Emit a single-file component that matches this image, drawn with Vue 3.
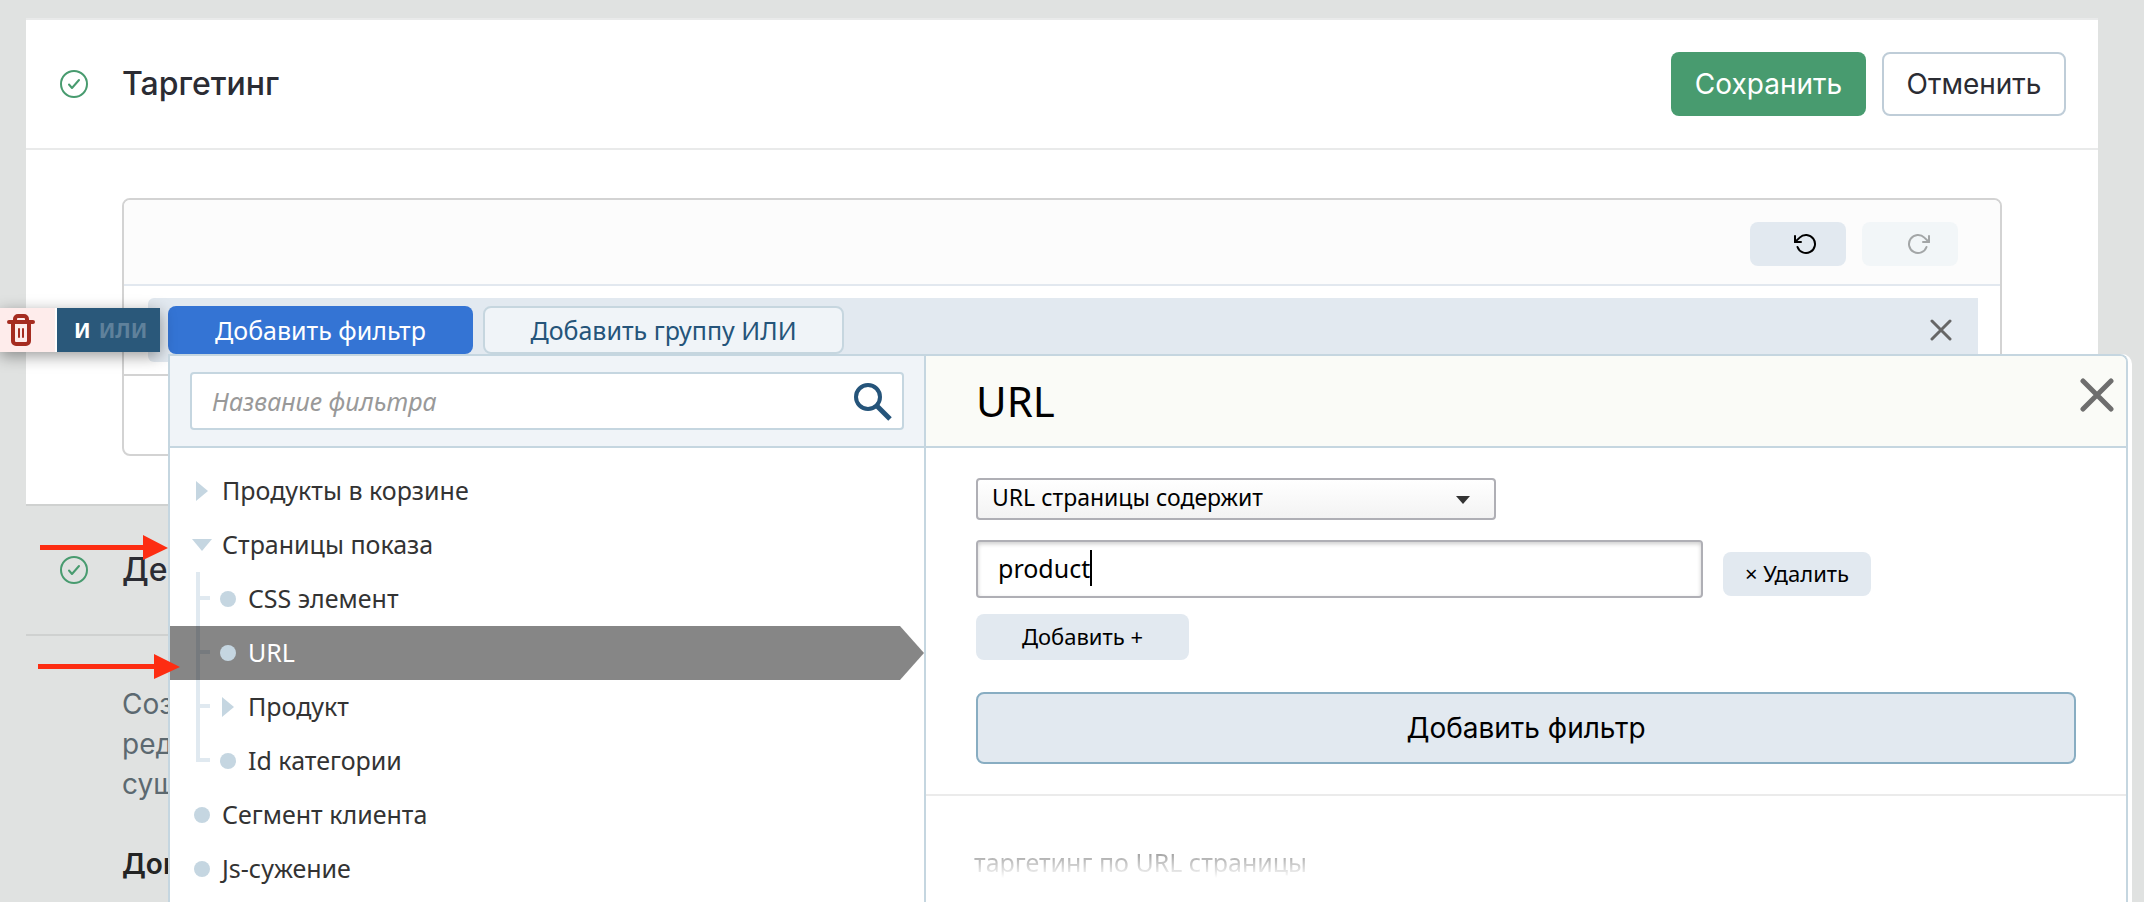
<script setup>
import { ref } from 'vue'

const search = ref('')
const condition = ref('contains')
const value = ref('product')

const filters = [
  { label: 'Продукты в корзине', marker: 'closed' },
  {
    label: 'Страницы показа',
    marker: 'open',
    children: [
      { label: 'CSS элемент', marker: 'dot' },
      { label: 'URL', marker: 'dot', selected: true },
      { label: 'Продукт', marker: 'closed' },
      { label: 'Id категории', marker: 'dot' },
    ],
  },
  { label: 'Сегмент клиента', marker: 'dot' },
  { label: 'Js-сужение', marker: 'dot' },
]
</script>

<template>
  <div class="page">
    <section class="card">
      <header class="card-head">
        <svg class="status" viewBox="0 0 28 28" aria-hidden="true">
          <circle cx="14" cy="14" r="13" />
          <path d="M9 14.5 12 18 19 10" />
        </svg>
        <h2>Таргетинг</h2>
        <div class="actions">
          <button type="button" class="btn save">Сохранить</button>
          <button type="button" class="btn cancel">Отменить</button>
        </div>
      </header>
      <div class="card-body">
        <div class="builder">
          <div class="tools">
            <button type="button" class="tool" aria-label="Назад">
              <svg viewBox="0 0 24 24">
                <polyline points="1 4 1 10 7 10" />
                <path d="M3.51 15a9 9 0 1 0 2.13-9.36L1 10" />
              </svg>
            </button>
            <button type="button" class="tool" disabled aria-label="Вперёд">
              <svg viewBox="0 0 24 24">
                <polyline points="23 4 23 10 17 10" />
                <path d="M20.49 15a9 9 0 1 1-2.12-9.36L23 10" />
              </svg>
            </button>
          </div>
          <div class="group-row">
            <div class="group">
              <button type="button" class="add add-filter">Добавить фильтр</button>
              <button type="button" class="add add-group">Добавить группу ИЛИ</button>
              <button type="button" class="group-close" aria-label="Закрыть">
                <svg viewBox="0 0 22 22"><path d="M2 2 20 20M20 2 2 20" /></svg>
              </button>
            </div>
          </div>
          <div class="builder-foot"></div>
        </div>
      </div>
    </section>

    <section class="next">
      <header class="card-head">
        <svg class="status" viewBox="0 0 28 28" aria-hidden="true">
          <circle cx="14" cy="14" r="13" />
          <path d="M9 14.5 12 18 19 10" />
        </svg>
        <h2>Ден</h2>
      </header>
      <div class="next-body">
        <p>Соз<br />ред<br />сущ</p>
        <h3>Доп</h3>
      </div>
    </section>

    <div class="chip">
      <button type="button" class="trash" aria-label="Удалить группу">
        <svg viewBox="0 0 28 32">
          <path class="line" d="M2 8H26M8 7V5a3 3 0 0 1 3-3h6a3 3 0 0 1 3 3V7M6 8V27a3 3 0 0 0 3 3h10a3 3 0 0 0 3-3V8" />
          <path class="thin" d="M12 15V23M16 15V23" />
        </svg>
      </button>
      <button type="button" class="logic"><b>И</b><b class="off">ИЛИ</b></button>
    </div>

    <div class="popup">
      <div class="popup-inner">
        <aside class="side">
          <div class="side-head">
            <label class="search">
              <input v-model="search" type="text" placeholder="Название фильтра" aria-label="Название фильтра" />
              <svg viewBox="0 0 38 38" aria-hidden="true">
                <circle cx="14" cy="14" r="12" />
                <path d="M23 23 36 36" />
              </svg>
            </label>
          </div>
          <ul class="tree">
            <li v-for="item in filters" :key="item.label">
              <button type="button" class="row">
                <span class="mark"><i :class="item.marker"></i></span>
                <span class="label">{{ item.label }}</span>
              </button>
              <ul v-if="item.children" class="branch">
                <li v-for="child in item.children" :key="child.label">
                  <button type="button" class="row" :class="{ selected: child.selected }">
                    <span class="mark"><i :class="child.marker"></i></span>
                    <span class="label">{{ child.label }}</span>
                  </button>
                </li>
              </ul>
            </li>
          </ul>
        </aside>

        <section class="detail">
          <header class="detail-head">
            <h1>URL</h1>
            <button type="button" class="detail-close" aria-label="Закрыть окно">
              <svg viewBox="0 0 34 34"><path d="M3 3 31 31M31 3 3 31" /></svg>
            </button>
          </header>
          <form class="form" @submit.prevent>
            <div class="select">
              <select v-model="condition" aria-label="Условие">
                <option value="contains">URL страницы содержит</option>
              </select>
              <svg viewBox="0 0 14 8" aria-hidden="true"><path d="M0 0H14L7 8Z" /></svg>
            </div>
            <div class="value-row">
              <div class="field">
                <input v-model="value" type="text" aria-label="Значение" />
                <span class="caret"></span>
              </div>
              <button type="button" class="small remove">× Удалить</button>
            </div>
            <button type="button" class="small more">Добавить +</button>
            <button type="submit" class="apply">Добавить фильтр</button>
          </form>
          <p class="about">таргетинг по URL страницы</p>
        </section>
      </div>
    </div>

    <svg class="pointer pointer-a" viewBox="0 0 128 26" aria-hidden="true">
      <path d="M0 10H103V0L128 13 103 25V15H0Z" />
    </svg>
    <svg class="pointer pointer-b" viewBox="0 0 142 26" aria-hidden="true">
      <path d="M0 10H116V0L142 13 116 25V15H0Z" />
    </svg>
  </div>
</template>

<style>
body {
  margin: 0;
  background: #e0e2e1;
}
</style>

<style scoped>
.page {
  position: relative;
  box-sizing: border-box;
  min-height: 100vh;
  padding: 18px 46px 0 26px;
  overflow: hidden;
  background: #e0e2e1;
  color: #2b2c33;
  font-family: Inter, "Liberation Sans", sans-serif;
  font-size: 28px;
}
.page *,
.page *::before,
.page *::after {
  box-sizing: border-box;
}
button,
input,
select {
  margin: 0;
  padding: 0;
  border: 0;
  background: none;
  color: inherit;
  font: inherit;
}
h1,
h2,
h3,
p,
ul {
  margin: 0;
  padding: 0;
  font-weight: 400;
}
ul {
  list-style: none;
}
svg {
  display: block;
  fill: none;
  flex: none;
}

.card {
  background: #fff;
  border-top: 2px solid #e9eaea;
  border-bottom: 2px solid #cfd1d0;
}
.card-head {
  display: flex;
  align-items: center;
  height: 130px;
  padding: 0 32px 0 34px;
  border-bottom: 2px solid #e9eaea;
}
.status {
  width: 28px;
  height: 28px;
  margin-right: 34px;
  stroke: #489b6f;
  stroke-width: 2;
  stroke-linecap: round;
  stroke-linejoin: round;
}
h2 {
  font-size: 32px;
  line-height: 40px;
  font-weight: 500;
}
.actions {
  display: flex;
  gap: 16px;
  margin-left: auto;
}
.btn {
  height: 64px;
  border-radius: 8px;
}
.save {
  min-width: 195px;
  background: #489b6f;
  color: #fff;
}
.cancel {
  min-width: 184px;
  border: 2px solid #bfcdd8;
  background: #fff;
}
.card-body {
  padding: 48px 96px;
}
.builder {
  border: 2px solid #d3d3d3;
  border-radius: 8px;
}
.tools {
  display: flex;
  justify-content: flex-end;
  align-items: center;
  gap: 16px;
  height: 86px;
  padding: 4px 42px 0 0;
  border-bottom: 2px solid #e2e8ef;
  border-radius: 6px 6px 0 0;
  background: #fcfcfc;
}
.tool {
  display: flex;
  align-items: center;
  justify-content: center;
  width: 96px;
  height: 44px;
  padding-left: 16px;
  border-radius: 8px;
  background: #e2e9f0;
  color: #000;
}
.tool svg {
  width: 24px;
  height: 24px;
  stroke: currentColor;
  stroke-width: 2;
  stroke-linecap: round;
  stroke-linejoin: round;
}
.tool:disabled {
  background: #f2f6f8;
  color: #a3a6a7;
}
.group-row {
  padding: 12px 22px 12px 24px;
  border-bottom: 2px solid #d3d3d3;
}
.group {
  display: flex;
  align-items: center;
  gap: 10px;
  padding: 8px 26px 8px 20px;
  border-radius: 6px 0 0 6px;
  background: #e2e9f0;
}
.add {
  height: 48px;
  border-radius: 8px;
  font-family: "Noto Sans", "Open Sans", sans-serif;
  font-size: 25px;
}
.add-filter {
  width: 305px;
  background: #3474d4;
  color: #fff;
}
.add-group {
  width: 361px;
  border: 2px solid #c6d6df;
  background: #f0f4f8;
  color: #25547a;
}
.group-close {
  margin-left: auto;
}
.group-close svg {
  width: 22px;
  height: 22px;
  stroke: #666;
  stroke-width: 3;
  stroke-linecap: round;
}
.builder-foot {
  height: 78px;
}

.next .card-head {
  border-color: #cfd1d0;
}
.next-body {
  padding: 48px 96px 0;
}
.next-body p {
  color: #5c6970;
  line-height: 40px;
}
.next-body h3 {
  margin-top: 40px;
  color: #232424;
  font-size: 28px;
  line-height: 40px;
  font-weight: 600;
}

.chip {
  position: absolute;
  top: 308px;
  left: 0;
  display: flex;
  height: 44px;
  gap: 2px;
  background: #fff;
  box-shadow: 0 4px 16px rgba(0, 0, 0, 0.4);
}
.trash {
  width: 55px;
  padding-left: 7px;
  background: #feeceb;
}
.trash svg {
  width: 28px;
  height: 32px;
  stroke: #a52c20;
  stroke-linecap: round;
}
.trash .line {
  stroke-width: 4;
}
.trash .thin {
  stroke-width: 2;
}
.logic {
  display: flex;
  align-items: center;
  gap: 8px;
  width: 103px;
  padding-left: 17px;
  background: #2a587a;
  color: #fff;
  font-family: "Noto Sans", "Open Sans", sans-serif;
  font-size: 21px;
}
.off {
  color: #5f819b;
}

.popup {
  position: absolute;
  z-index: 1;
  top: 354px;
  right: 12px;
  bottom: 0;
  left: 168px;
  padding-right: 4px;
  border-radius: 0 10px 0 0;
  background: #fff;
  color: #000;
  font-family: "Noto Sans", "Open Sans", sans-serif;
  font-size: 25px;
}
.popup-inner {
  display: grid;
  grid-template-columns: 756px 1fr;
  height: 100%;
  border: 2px solid #c5d6e0;
  border-bottom: 0;
  border-radius: 0 8px 0 0;
  overflow: hidden;
}
.side {
  border-right: 2px solid #c5d6e0;
}
.side-head {
  height: 92px;
  padding: 16px 20px;
  border-bottom: 2px solid #c5d6e0;
  background: #f0f4f8;
}
.search {
  display: flex;
  align-items: center;
  height: 58px;
  padding: 2px 10px 0 20px;
  border: 2px solid #c5d6e0;
  border-radius: 4px;
  background: #fff;
}
.search input {
  flex: 1;
  min-width: 0;
  padding-bottom: 2px;
  outline: 0;
  font-style: italic;
}
.search input::placeholder {
  color: #999;
  opacity: 1;
}
.search svg {
  width: 38px;
  height: 38px;
  stroke: #25547a;
  stroke-width: 4;
}
.search path {
  stroke-width: 5;
}

.tree {
  padding-top: 16px;
  color: #333;
}
.row {
  position: relative;
  z-index: 1;
  display: flex;
  align-items: center;
  gap: 10px;
  width: 100%;
  height: 54px;
  padding-left: 22px;
  text-align: left;
}
.label {
  padding-bottom: 2px;
}
.branch .row {
  padding-left: 48px;
}
.branch li {
  position: relative;
}
.branch li::before,
.branch li::after {
  content: "";
  position: absolute;
  left: 26px;
  background: #e0e9f0;
}
.branch li::before {
  top: 0;
  width: 4px;
  height: 100%;
}
.branch li:last-child::before {
  height: 28px;
}
.branch li::after {
  top: 24px;
  width: 14px;
  height: 4px;
}
.selected {
  background: rgba(0, 0, 0, 0.475);
  color: #fff;
  clip-path: polygon(0 0, calc(100% - 24px) 0, 100% 50%, calc(100% - 24px) 100%, 0 100%);
}
.mark {
  display: flex;
  justify-content: center;
  width: 20px;
}
.dot {
  width: 16px;
  height: 16px;
  border-radius: 50%;
  background: #c5d6e1;
}
.closed {
  width: 12px;
  height: 20px;
  background: #c5d6e1;
  clip-path: polygon(0 0, 100% 50%, 0 100%);
}
.open {
  width: 20px;
  height: 12px;
  background: #c5d6e1;
  clip-path: polygon(0 0, 100% 0, 50% 100%);
}

.detail {
  min-width: 0;
}
.detail-head {
  display: flex;
  align-items: center;
  justify-content: space-between;
  height: 92px;
  padding: 0 12px 0 50px;
  border-bottom: 2px solid #c5d6e0;
  background: #fafbf7;
}
h1 {
  font-size: 42px;
  line-height: 48px;
}
.detail-close {
  align-self: flex-start;
  margin-top: 22px;
}
.detail-close svg {
  width: 34px;
  height: 34px;
  stroke: #6e6e6e;
  stroke-width: 5;
  stroke-linecap: round;
}
.form {
  display: flex;
  flex-direction: column;
  align-items: flex-start;
  padding: 30px 50px;
  border-bottom: 2px solid #ebebeb;
}
.select {
  position: relative;
  width: 520px;
}
.select select {
  display: block;
  width: 100%;
  height: 42px;
  padding: 0 40px 4px 14px;
  border: 2px solid #afafb5;
  border-radius: 4px;
  background: linear-gradient(#fff, #f3f3f3);
  appearance: none;
  font-size: 23px;
}
.select svg {
  position: absolute;
  top: 18px;
  right: 26px;
  width: 14px;
  height: 8px;
  fill: #333;
}
.value-row {
  display: flex;
  align-items: center;
  gap: 20px;
  width: 100%;
  margin: 20px 0 16px;
}
.field {
  position: relative;
  flex: 0 1 727px;
}
.field input {
  display: block;
  width: 100%;
  height: 58px;
  padding: 0 20px 2px;
  border: 2px solid #afafb5;
  border-radius: 4px;
  outline: 0;
  background: #fff;
  box-shadow: inset 0 2px 4px rgba(0, 0, 0, 0.2);
}
.caret {
  position: absolute;
  top: 10px;
  left: 114px;
  width: 2px;
  height: 36px;
  background: #000;
}
.small {
  padding-bottom: 2px;
  border-radius: 8px;
  background: #e2e9f0;
  font-size: 22px;
}
.remove {
  width: 148px;
  height: 44px;
  margin-top: 10px;
}
.more {
  width: 213px;
  height: 46px;
}
.apply {
  width: 100%;
  height: 72px;
  margin-top: 32px;
  border: 2px solid #88adc2;
  border-radius: 8px;
  background: #e2e9f0;
  font-family: Inter, "Liberation Sans", sans-serif;
  font-size: 28px;
}
.about {
  margin: 46px 48px 0;
  line-height: 40px;
  background: linear-gradient(#777 0, #fff 90%);
  background-clip: text;
  color: transparent;
}

.pointer {
  position: absolute;
  z-index: 2;
  height: 26px;
  fill: #fd2d12;
}
.pointer-a {
  top: 535px;
  left: 40px;
  width: 128px;
}
.pointer-b {
  top: 654px;
  left: 38px;
  width: 142px;
}
</style>
